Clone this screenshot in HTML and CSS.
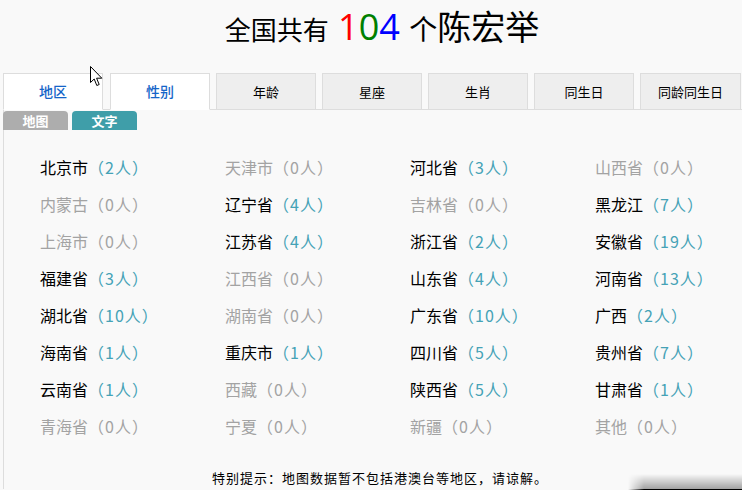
FILE: index.html
```html
<!DOCTYPE html>
<html lang="zh-CN">
<head>
    <meta charset="UTF-8">
    <title>全国共有104个陈宏举</title>
    <link rel="stylesheet" href="styles.css">
</head>
<body>
    <h1 class="title">全国共有<span class="num-big"> <span class="d1">1</span><span class="d2">0</span><span class="d3">4</span> </span><span class="ge">个</span><span class="who">陈宏举</span></h1>

    <ul class="tabs">
        <li class="tab active">地区</li>
        <li class="tab active">性别</li>
        <li class="tab">年龄</li>
        <li class="tab">星座</li>
        <li class="tab">生肖</li>
        <li class="tab">同生日</li>
        <li class="tab">同龄同生日</li>
    </ul>

    <div class="panel">
        <div class="sub-tabs">
            <span class="sub-tab">地图</span>
            <span class="sub-tab on">文字</span>
        </div>

        <div class="area-list" id="areaList"></div>

        <p class="tip">特别提示：地图数据暂不包括港澳台等地区，请谅解。</p>
    </div>

    <!-- 鼠标指针 -->
    <svg class="cursor" width="13" height="21" viewBox="0 0 13 21">
        <path d="M0.5 0.5 L0.5 16.5 L4.2 13 L6.8 19.5 L9.2 18.5 L6.6 12.2 L11.8 12.2 Z" fill="#fff" stroke="#000" stroke-width="1"/>
    </svg>
    <div class="shade"></div>

    <script>
        // 各地区人数
        let areas = [
            ["北京市", 2], ["天津市", 0], ["河北省", 3], ["山西省", 0],
            ["内蒙古", 0], ["辽宁省", 4], ["吉林省", 0], ["黑龙江", 7],
            ["上海市", 0], ["江苏省", 4], ["浙江省", 2], ["安徽省", 19],
            ["福建省", 3], ["江西省", 0], ["山东省", 4], ["河南省", 13],
            ["湖北省", 10], ["湖南省", 0], ["广东省", 10], ["广西", 2],
            ["海南省", 1], ["重庆市", 1], ["四川省", 5], ["贵州省", 7],
            ["云南省", 1], ["西藏", 0], ["陕西省", 5], ["甘肃省", 1],
            ["青海省", 0], ["宁夏", 0], ["新疆", 0], ["其他", 0]
        ];

        let list = document.getElementById("areaList");
        areas.forEach(a => {
            let item = document.createElement("div");
            item.classList.add("area");
            if (a[1] === 0) item.classList.add("zero");
            item.innerHTML = `<span class="name">${a[0]}</span><span class="num">（${a[1]}人）</span>`;
            list.appendChild(item);
        });
    </script>
</body>
</html>
```

FILE: styles.css
```css
/* 전체 */
html {
    overflow: hidden;
}

body {
    margin: 0;
    background: #f9f9f9;
    font-family: "Noto Sans CJK SC", "Microsoft YaHei", sans-serif;
    color: #000;
}

/* 제목 */
.title {
    margin: 0;
    padding-left: 22px;
    height: 52px;
    line-height: 52px;
    text-align: center;
    font-size: 26px;
    font-weight: normal;
    white-space: nowrap;
}

.title .num-big {
    font-size: 36px;
    font-family: "Open Sans", "Noto Sans CJK SC", sans-serif;
}
.d1 { color: #f00; }
.d2 { color: #008000; }
.d3 { color: #00f; }

.title .ge {
    font-size: 28px;
}

.title .who {
    font-size: 34px;
}

/* 탭 */
.tabs {
    list-style: none;
    margin: 21px 0 0 3px;
    padding: 0;
    display: flex;
    gap: 6px;
    border-bottom: 1px solid #ddd;
}

.tab {
    width: 98px;
    height: 35px;
    line-height: 35px;
    margin-bottom: -1px;
    text-align: center;
    font-size: 13px;
    background: #eee;
    border: 1px solid #ddd;
}

.tab:first-child {
    margin-right: 1px;
}

.tab:last-child {
    width: 99px;
}

.tab.active {
    background: #fff;
    border-bottom-color: #fff;
    color: #1565c8;
    font-size: 14px;
    font-weight: 500;
}

/* 내용 */
.panel {
    margin-left: 3px;
    border-left: 1px solid #ddd;
}

.sub-tabs {
    display: flex;
    gap: 4px;
    padding-top: 1px;
    margin-left: -1px;
}

.sub-tab {
    width: 65px;
    height: 19px;
    line-height: 19px;
    text-align: center;
    font-size: 13px;
    font-weight: bold;
    color: #fff;
    background: #adadad;
    border-radius: 4px 4px 0 0;
}

.sub-tab.on {
    background: #3f9ea9;
}

.area-list {
    display: grid;
    grid-template-columns: 185px 185px 185px 1fr;
    padding: 19px 0 0 36px;
}

.area {
    height: 37px;
    line-height: 37px;
    font-size: 16px;
    white-space: nowrap;
}

.area .num {
    color: #45a2b6;
    letter-spacing: 1px;
}

.area.zero .name,
.area.zero .num {
    color: #a3a3a3;
}

.tip {
    margin: 22px 0 0;
    padding-left: 14px;
    text-align: center;
    font-size: 13px;
    line-height: 22px;
    letter-spacing: 1px;
}

/* 커서, 그림자 */
.cursor {
    position: absolute;
    left: 90px;
    top: 66px;
}

.shade {
    position: absolute;
    left: 628px;
    top: 474px;
    width: 114px;
    height: 15px;
    border-bottom: 1px solid #000;
    background: linear-gradient(to bottom, rgba(0, 0, 0, 0), rgba(0, 0, 0, 0.35));
    -webkit-mask-image: linear-gradient(to right, transparent, #000 16px);
    mask-image: linear-gradient(to right, transparent, #000 16px);
}
```
